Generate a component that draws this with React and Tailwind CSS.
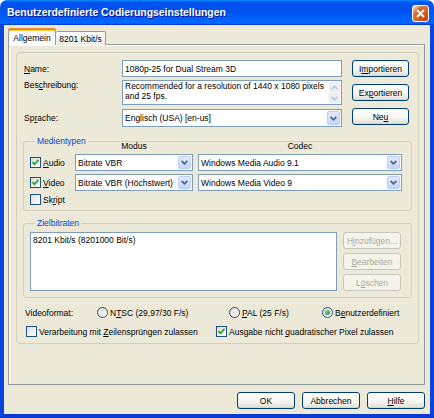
import React from "react";

const U = ({ children }) => (
  <span className="underline decoration-[1px] underline-offset-[1px]">{children}</span>
);

function Btn({ children, className = "", disabled = false }) {
  return (
    <div
      className={
        "h-[17px] rounded-[3px] border flex items-center justify-center shrink-0 " +
        (disabled
          ? "border-[#C9C7BA] bg-[#F5F4EA] text-[#ACA899] "
          : "border-[#003C74] bg-[linear-gradient(to_bottom,#FFFFFF_0%,#F4F4EF_60%,#E6E3D8_90%,#D6D0C5_100%)] text-black ") +
        className
      }
    >
      {children}
    </div>
  );
}

function Chevron({ color = "#4D6185", up = false }) {
  return (
    <svg width="7" height="5" viewBox="0 0 7 5">
      <path
        d={up ? "M0.6 4.2 L3.5 1.2 L6.4 4.2" : "M0.6 0.9 L3.5 3.9 L6.4 0.9"}
        stroke={color}
        strokeWidth="1.6"
        fill="none"
      />
    </svg>
  );
}

function Select({ children, className = "" }) {
  return (
    <div className={"border border-[#7F9DB9] bg-white flex items-stretch shrink-0 " + className}>
      <div className="flex-1 flex items-center pl-[2px] whitespace-nowrap overflow-hidden">{children}</div>
      <div className="w-[13px] m-px rounded-[2px] border border-[#B9CDF7] bg-[linear-gradient(to_bottom,#E3ECFE,#C3D5FC)] flex items-center justify-center">
        <Chevron />
      </div>
    </div>
  );
}

function Check({ checked }) {
  return (
    <div className="w-[11px] h-[11px] border border-[#1C5180] bg-[linear-gradient(135deg,#DCDCD7,#FFFFFF)] flex items-center justify-center shrink-0">
      {checked && (
        <svg width="9" height="9" viewBox="0 0 9 9">
          <path d="M1.5 4.2 L3.5 6.3 L7.6 1.8" stroke="#21A121" strokeWidth="1.7" fill="none" />
        </svg>
      )}
    </div>
  );
}

function Radio({ checked }) {
  return (
    <div className="w-[11px] h-[11px] rounded-full border border-[#1C5180] bg-[linear-gradient(135deg,#DCDCD7,#FFFFFF)] flex items-center justify-center shrink-0">
      {checked && (
        <div className="w-[5px] h-[5px] rounded-full bg-[radial-gradient(circle_at_35%_35%,#7CD47A,#1E7E21)]" />
      )}
    </div>
  );
}

export default function App() {
  return (
    <div className="w-[434px] h-[418px] flex flex-col font-['Liberation_Sans',Arial,sans-serif] text-[8.5px] leading-[10px] text-black select-none">
      {/* Title bar */}
      <div className="h-[25px] shrink-0 rounded-t-[7px] bg-[linear-gradient(to_bottom,#0997FF_0%,#0053EE_8%,#0050EE_40%,#0066FF_88%,#0066FF_93%,#005BFF_95%,#003DD7_96%,#003DD7_100%)] flex items-center justify-between pl-[7px] pr-[5px]">
        <span className="text-white font-bold text-[10.4px] [text-shadow:1px_1px_#0F1089]">
          Benutzerdefinierte Codierungseinstellungen
        </span>
        <div className="w-[17px] h-[17px] mt-px rounded-[3px] border border-white bg-[radial-gradient(circle_at_90%_90%,#CC4600_0%,#DC6527_55%,#CD7546_70%,#FFCCB2_90%,#FFFFFF_100%)] flex items-center justify-center">
          <svg width="9" height="9" viewBox="0 0 9 9">
            <path d="M1 1 L8 8 M8 1 L1 8" stroke="white" strokeWidth="1.8" />
          </svg>
        </div>
      </div>

      {/* Body */}
      <div className="flex-1 flex flex-col bg-[#ECE9D8] border-x-[4px] border-b-[4px] border-x-[#0A44DE] border-b-[#0A3AD0] pt-[3px] pl-[4px] pr-[5px]">
        {/* Tabs */}
        <div className="flex items-end -mb-px relative z-10">
          <div className="h-[17px] w-[48px] border-x border-[#919B9C] border-t-2 border-t-[#E68B2C] shadow-[inset_0_1px_#FFC83C] rounded-t-[2px] bg-[#FCFCFE] flex items-center justify-center">
            Allgemein
          </div>
          <div className="h-[14px] w-[50px] border border-b-0 border-l-0 border-[#919B9C] rounded-t-[2px] bg-[linear-gradient(to_bottom,#FFFFFF,#ECEBE5)] flex items-center justify-center">
            8201 Kbit/s
          </div>
        </div>

        {/* Tab panel */}
        <div className="h-[341px] shrink-0 border border-[#919B9C] bg-[#ECE9D8] shadow-[inset_1px_1px_#FFFFFF] flex flex-col">
          <div className="mt-[7px] ml-[7px] mr-[5px] h-[292px] border border-[#D0D0BF] rounded-[4px] flex flex-col">
            {/* Top section */}
            <div className="flex pt-[7px] pl-[7px]">
              <div className="flex flex-col">
                <div className="flex items-center h-[17px]">
                  <div className="w-[98px]">
                    <U>N</U>ame:
                  </div>
                  <div className="w-[220px] h-[17px] border border-[#7F9DB9] bg-white flex items-center pl-[2px]">
                    1080p-25 for Dual Stream 3D
                  </div>
                </div>
                <div className="flex mt-[3px]">
                  <div className="w-[98px] pt-[0px]">
                    Bes<U>c</U>hreibung:
                  </div>
                  <div className="w-[220px] h-[25px] border border-[#7F9DB9] bg-white flex">
                    <div className="flex-1 pl-[2px] pt-[1px] leading-[9.5px]">
                      Recommended for a resolution of 1440 x 1080 pixels
                      <br />
                      and 25 fps.
                    </div>
                    <div className="w-[13px] flex flex-col gap-px p-px bg-[#FCFCF9]">
                      <div className="flex-1 rounded-[2px] border border-[#E4E8F2] bg-[#EEF1F8] flex items-center justify-center">
                        <Chevron color="#BAC4D8" up />
                      </div>
                      <div className="flex-1 rounded-[2px] border border-[#E4E8F2] bg-[#EEF1F8] flex items-center justify-center">
                        <Chevron color="#BAC4D8" />
                      </div>
                    </div>
                  </div>
                </div>
                <div className="flex items-center mt-[4px] h-[18px]">
                  <div className="w-[98px]">
                    Sp<U>r</U>ache:
                  </div>
                  <Select className="w-[220px] h-[18px]">Englisch (USA) [en-us]</Select>
                </div>
              </div>
              <div className="flex flex-col ml-[10px]">
                <Btn className="w-[57px]">
                  I<U>m</U>portieren
                </Btn>
                <Btn className="w-[57px] mt-[7px]">
                  Ex<U>p</U>ortieren
                </Btn>
                <Btn className="w-[57px] mt-[7px]">
                  Ne<U>u</U>
                </Btn>
              </div>
            </div>

            {/* Medientypen */}
            <fieldset className="mt-[9px] mx-[6px] border border-[#D0D0BF] rounded-[3px] pl-[6px] pb-[4px]">
              <legend className="ml-[5px] px-[2px] text-[#0046D5] leading-[10px]">Medientypen</legend>
              <div className="flex -mt-[5px] h-[10px]">
                <div className="w-[45px]" />
                <div className="w-[118px] text-center">Modus</div>
                <div className="w-[204px] ml-[5px] text-center">Codec</div>
              </div>
              <div className="flex items-center h-[17px] mt-[3px]">
                <div className="w-[45px] flex items-center gap-[2px]">
                  <Check checked />
                  <span>
                    <U>A</U>udio
                  </span>
                </div>
                <Select className="w-[118px] h-[17px]">Bitrate VBR</Select>
                <Select className="w-[204px] h-[17px] ml-[5px]">Windows Media Audio 9.1</Select>
              </div>
              <div className="flex items-center h-[17px] mt-[3px]">
                <div className="w-[45px] flex items-center gap-[2px]">
                  <Check checked />
                  <span>
                    <U>V</U>ideo
                  </span>
                </div>
                <Select className="w-[118px] h-[17px]">Bitrate VBR (Höchstwert)</Select>
                <Select className="w-[204px] h-[17px] ml-[5px]">Windows Media Video 9</Select>
              </div>
              <div className="flex items-center h-[13px] mt-[2px]">
                <div className="flex items-center gap-[2px]">
                  <Check />
                  <span>
                    Sk<U>r</U>ipt
                  </span>
                </div>
              </div>
            </fieldset>

            {/* Zielbitraten */}
            <fieldset className="mt-[7px] mx-[6px] border border-[#D0D0BF] rounded-[3px] pl-[6px] pb-[6px]">
              <legend className="ml-[5px] px-[2px] text-[#0046D5] leading-[10px]">Zielbitraten</legend>
              <div className="flex mt-[4px]">
                <div className="w-[307px] h-[59px] border border-[#7F9DB9] bg-white pl-[2px] pt-[2px]">
                  8201 Kbit/s (8201000 Bit/s)
                </div>
                <div className="flex flex-col gap-[4px] ml-[6px]">
                  <Btn disabled className="w-[58px]">
                    H<U>i</U>nzufügen...
                  </Btn>
                  <Btn disabled className="w-[58px]">
                    <U>B</U>earbeiten
                  </Btn>
                  <Btn disabled className="w-[58px]">
                    L<U>ö</U>schen
                  </Btn>
                </div>
              </div>
            </fieldset>

            {/* Videoformat */}
            <div className="flex items-center h-[13px] mt-[8px] pl-[8px]">
              <div className="w-[72px]">Videoformat:</div>
              <div className="w-[132px] flex items-center gap-[2px]">
                <Radio />
                <span>
                  N<U>T</U>SC (29,97/30 F/s)
                </span>
              </div>
              <div className="w-[93px] flex items-center gap-[2px]">
                <Radio />
                <span>
                  <U>P</U>AL (25 F/s)
                </span>
              </div>
              <div className="flex items-center gap-[2px]">
                <Radio checked />
                <span>
                  B<U>e</U>nutzerdefiniert
                </span>
              </div>
            </div>
            <div className="flex items-center h-[11px] mt-[7px] pl-[9px]">
              <div className="w-[190px] flex items-center gap-[2px]">
                <Check />
                <span>
                  Verarbeitung mit <U>Z</U>eilensprüngen zulassen
                </span>
              </div>
              <div className="flex items-center gap-[2px]">
                <Check checked />
                <span>
                  Ausgabe nicht <U>q</U>uadratischer Pixel zulassen
                </span>
              </div>
            </div>
          </div>
        </div>

        {/* Bottom buttons */}
        <div className="flex justify-end gap-[7px] mt-[7px]">
          <Btn className="w-[58px]">OK</Btn>
          <Btn className="w-[58px]">Abbrechen</Btn>
          <Btn className="w-[58px]">
            <U>H</U>ilfe
          </Btn>
        </div>
      </div>
    </div>
  );
}
